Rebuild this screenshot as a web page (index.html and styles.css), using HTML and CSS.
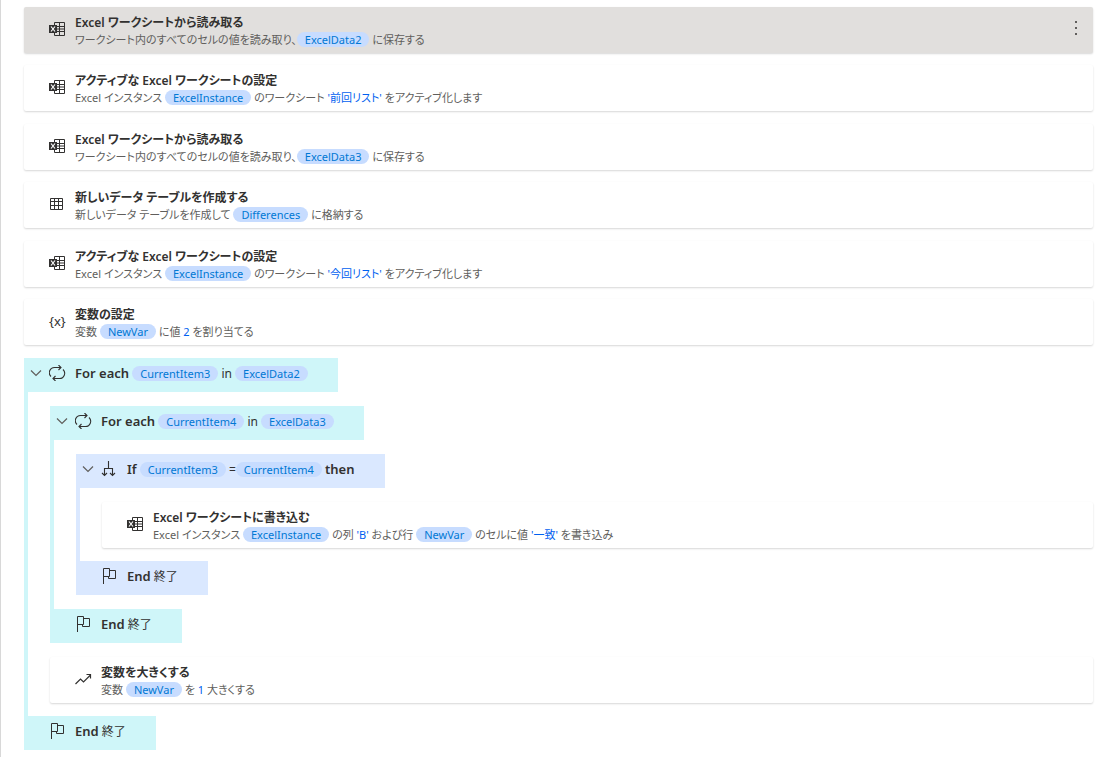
FILE: index.html
```
<!DOCTYPE html>
<html lang="ja">
<head>
  <meta charset="UTF-8" />
  <title>Main flow</title>
  <link rel="stylesheet" href="styles.css">
</head>
<body>

  <!-- Icon shapes shared by the steps -->
  <svg class="icon-defs" width="0" height="0">
    <symbol id="icon-excel" viewBox="0 0 17 16">
      <path d="M5.500 4V1.500H15.500V14.500H5.500V12M8 5.500H15.500M8 10.500H15.500M8 8H15.500M10.500 1.500V14.500" fill="none" stroke="#323130"/>
      <rect x="0" y="4" width="8" height="8" fill="#323130"/>
      <path d="M2 5.500L6 10.500M6 5.500L2 10.500" stroke="#fff" stroke-width="1.200"/>
    </symbol>
    <symbol id="icon-table" viewBox="0 0 17 16">
      <path d="M1.500 2.500H13.500V13.500H1.500ZM1.500 5.500H13.500M1.500 9.500H13.500M5.500 2.500V13.500M9.500 2.500V13.500" fill="none" stroke="#323130"/>
    </symbol>
    <symbol id="icon-loop" viewBox="0 0 17 16">
      <path d="M2 11.500A5.200 5.200 0 0 1 5.500 2.500H12M9.500 0L12 2.500L9.500 5M14 4.500A5.200 5.200 0 0 1 10.500 13.500H4M6.500 11L4 13.500L6.500 16" fill="none" stroke="#323130" stroke-width="1.100"/>
    </symbol>
    <symbol id="icon-branch" viewBox="0 0 17 16">
      <path d="M7.500 0V7.500M3.500 14.500V7.500H11.500V14.500M1 12L3.500 14.500L6 12M9 12L11.500 14.500L14 12" fill="none" stroke="#323130" stroke-width="1.100"/>
    </symbol>
    <symbol id="icon-flag" viewBox="0 0 17 16">
      <path d="M2.500 16V0.500H8.500V8.500H2.500M8.500 2.500H14.500V10.500H7.500V8.500" fill="none" stroke="#323130"/>
    </symbol>
    <symbol id="icon-trend" viewBox="0 0 17 16">
      <path d="M0.500 13L5.500 8L8.500 11L15.500 4M11.500 3.500H15.500V7.500" fill="none" stroke="#323130" stroke-width="1.200"/>
    </symbol>
    <symbol id="icon-chevron" viewBox="0 0 12 8">
      <path d="M1 1.500L6 6.500L11 1.500" fill="none" stroke="#605e5c" stroke-width="1.200"/>
    </symbol>
  </svg>

  <main class="flow">
    <section class="step selected">
      <svg class="icon"><use href="#icon-excel"/></svg>
      <div class="step-text">
        <h3>Excel ワークシートから読み取る</h3>
        <p>ワークシート内のすべてのセルの値を読み取り、<span class="var">ExcelData2</span> に保存する</p>
      </div>
      <button class="more" type="button" aria-label="その他">
        <svg width="4" height="14" viewBox="0 0 4 14"><path d="M1 0h2v2H1zM1 6h2v2H1zM1 12h2v2H1z" fill="#605e5c"/></svg>
      </button>
    </section>

    <section class="step">
      <svg class="icon"><use href="#icon-excel"/></svg>
      <div class="step-text">
        <h3>アクティブな Excel ワークシートの設定</h3>
        <p>Excel インスタンス <span class="var">ExcelInstance</span> のワークシート <span class="value">'前回リスト'</span> をアクティブ化します</p>
      </div>
    </section>

    <section class="step">
      <svg class="icon"><use href="#icon-excel"/></svg>
      <div class="step-text">
        <h3>Excel ワークシートから読み取る</h3>
        <p>ワークシート内のすべてのセルの値を読み取り、<span class="var">ExcelData3</span> に保存する</p>
      </div>
    </section>

    <section class="step">
      <svg class="icon"><use href="#icon-table"/></svg>
      <div class="step-text">
        <h3>新しいデータ テーブルを作成する</h3>
        <p>新しいデータ テーブルを作成して <span class="var">Differences</span> に格納する</p>
      </div>
    </section>

    <section class="step">
      <svg class="icon"><use href="#icon-excel"/></svg>
      <div class="step-text">
        <h3>アクティブな Excel ワークシートの設定</h3>
        <p>Excel インスタンス <span class="var">ExcelInstance</span> のワークシート <span class="value">'今回リスト'</span> をアクティブ化します</p>
      </div>
    </section>

    <section class="step">
      <span class="icon icon-var">{x}</span>
      <div class="step-text">
        <h3>変数の設定</h3>
        <p>変数 <span class="var">NewVar</span> に値 <span class="value">2</span> を割り当てる</p>
      </div>
    </section>

    <!-- Outer loop -->
    <section class="block loop">
      <header class="block-head">
        <button class="toggle" type="button" aria-label="折りたたむ"><svg width="12" height="8"><use href="#icon-chevron"/></svg></button>
        <svg class="icon"><use href="#icon-loop"/></svg>
        <p><b>For each</b> <span class="var">CurrentItem3</span> in <span class="var">ExcelData2</span></p>
      </header>
      <div class="block-body">

        <!-- Inner loop -->
        <section class="block loop">
          <header class="block-head">
            <button class="toggle" type="button" aria-label="折りたたむ"><svg width="12" height="8"><use href="#icon-chevron"/></svg></button>
            <svg class="icon"><use href="#icon-loop"/></svg>
            <p><b>For each</b> <span class="var">CurrentItem4</span> in <span class="var">ExcelData3</span></p>
          </header>
          <div class="block-body">

            <section class="block condition">
              <header class="block-head">
                <button class="toggle" type="button" aria-label="折りたたむ"><svg width="12" height="8"><use href="#icon-chevron"/></svg></button>
                <svg class="icon"><use href="#icon-branch"/></svg>
                <p><b>If</b> <span class="var">CurrentItem3</span> =<span class="var">CurrentItem4</span> <b>then</b></p>
              </header>
              <div class="block-body">
                <section class="step">
                  <svg class="icon"><use href="#icon-excel"/></svg>
                  <div class="step-text">
                    <h3>Excel ワークシートに書き込む</h3>
                    <p>Excel インスタンス <span class="var">ExcelInstance</span> の列 <span class="value">'B'</span> および行 <span class="var">NewVar</span> のセルに値 <span class="value">'一致'</span> を書き込み</p>
                  </div>
                </section>
              </div>
              <footer class="block-end">
                <svg class="icon"><use href="#icon-flag"/></svg>
                <p><b>End</b> 終了</p>
              </footer>
            </section>

          </div>
          <footer class="block-end">
            <svg class="icon"><use href="#icon-flag"/></svg>
            <p><b>End</b> 終了</p>
          </footer>
        </section>

        <section class="step">
          <svg class="icon"><use href="#icon-trend"/></svg>
          <div class="step-text">
            <h3>変数を大きくする</h3>
            <p>変数 <span class="var">NewVar</span> を <span class="value">1</span> 大きくする</p>
          </div>
        </section>

      </div>
      <footer class="block-end">
        <svg class="icon"><use href="#icon-flag"/></svg>
        <p><b>End</b> 終了</p>
      </footer>
    </section>
  </main>

</body>
</html>
```
FILE: styles.css
```
* {
  box-sizing: border-box;
}

body {
  margin: 0;
  background: #fff;
  color: #323130;
  font-family: "Noto Sans", "Noto Sans CJK JP", sans-serif;
  font-size: 12px;
  font-feature-settings: "palt";
}

h3, p {
  margin: 0;
  white-space: nowrap;
}

button {
  padding: 0;
  border: none;
  background: none;
  cursor: pointer;
}

.icon-defs {
  position: absolute;
}

.flow {
  min-height: 100vh;
  padding: 7px 10px 7px 23px;
  border-left: 1px solid #d8d8d8;
}

.step {
  display: flex;
  align-items: center;
  height: 46px;
  margin-bottom: 13px;
  padding: 0 13px 2px 25px;
  border-radius: 2px;
  background: #fff;
  box-shadow: 0 1px 2px rgba(0, 0, 0, 0.16);
}

.flow > .step:nth-child(odd) {
  margin-bottom: 12px;
}

.step.selected {
  background: #e1dfdd;
}

.icon {
  flex: none;
  width: 17px;
  height: 16px;
  margin-right: 9px;
}

.icon-var {
  font-size: 13px;
  line-height: 16px;
}

.step-text {
  flex: 1;
  padding-top: 3px;
}

.step-text h3 {
  font-size: 12px;
  font-weight: 600;
  line-height: 17px;
}

.step-text p {
  color: #605e5c;
  font-size: 11px;
  line-height: 17px;
}

.var {
  display: inline-block;
  padding: 0 8px;
  border-radius: 8px;
  background: #c7dcff;
  color: #0078d4;
  font-size: 11px;
  line-height: 15px;
}

.step-text .value {
  color: #0060f0;
}

.more {
  width: 8px;
  height: 24px;
}

.block-head,
.block-end {
  display: flex;
  align-items: center;
  width: fit-content;
  height: 34px;
  padding-right: 30px;
  padding-bottom: 4px;
}

.block-head {
  padding-left: 6px;
}

.block-end {
  padding-left: 25px;
}

.block b {
  font-size: 13px;
  font-weight: 600;
}

.toggle {
  display: flex;
  width: 12px;
  margin-right: 7px;
}

.block-body {
  padding: 14px 0 0 22px;
  border-left: 4px solid #cff6f9;
}

.block .block {
  margin-bottom: 14px;
}

.block-body > .block:last-child {
  margin-bottom: 0;
  padding-bottom: 14px;
}

.loop > .block-head,
.loop > .block-end {
  background: #cff6f9;
}

.condition > .block-head,
.condition > .block-end {
  background: #dae8ff;
}

.condition > .block-body {
  border-left-color: #dae8ff;
}

.block-body > .step:last-child {
  margin-bottom: 0;
}

.block-body:has(> .step:last-child) {
  padding-bottom: 13px;
}
```
